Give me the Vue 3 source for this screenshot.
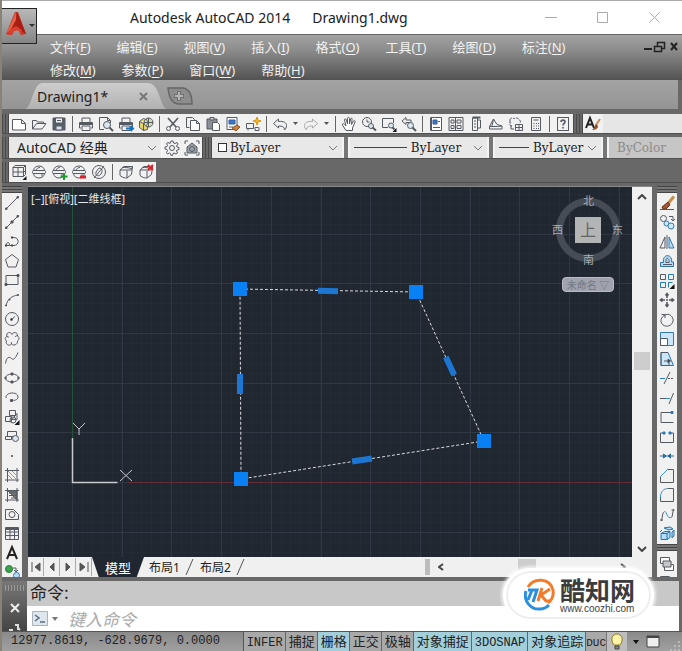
<script setup>
import { ref } from 'vue'

const menus = [
  ['文件', 'F'], ['编辑', 'E'], ['视图', 'V'], ['插入', 'I'], ['格式', 'O'], ['工具', 'T'],
  ['绘图', 'D'], ['标注', 'N'], ['修改', 'M'], ['参数', 'P'], ['窗口', 'W'], ['帮助', 'H'],
]

const globe = '<path d="M2.500 6.500C3 3.500 5 2 8 2s5 1.500 5.500 4.500zM2.500 9.500C3 12.500 5 14 8 14s5-1.500 5.500-4.500z"/><rect x="1.500" y="6.500" width="13" height="3" rx="1"/><path d="M5 6.500C5.500 4.500 7 3.500 9 3.500M11 9.500v3"/>'
const printer = '<path d="M4 6V2h8v4M3 12H1.500V6.500h13V12H13M4 10h8v4.500H4z"/><path d="M2 8h12" stroke-width="2"/>'
const cube = '<path d="M2 6l4-3.500h8.500L13 6zM2 6v5.500c3 2.500 5 2.500 7 2.500V6.500M9 14l4.500-3.500 1-8M4 3.500c3 0 7 0 9 1"/>'

const icons = {
  new: '<path d="M1.500 3.500h9l4 4v6.500h-13zM10.500 3.500v4h4" fill="#fff"/>',
  open: '<path d="M1.500 13V4.500h4l1 1.500h6v2M1.500 13l4-5.500h9.500l-4 5.500z"/>',
  save: '<path d="M2 2h12v12H2z" fill="#555e6b"/><path d="M4.500 2h7v5h-7z" fill="#eee"/><path d="M5 10h6v4H5z" fill="#dde"/><path d="M6 4.500h4"/>',
  print: printer,
  preview: '<path d="M6 13.500H1.500v-12h8l3 3V7M9.500 1.500v3h3"/><circle cx="9" cy="9" r="3.500" fill="#dce7ee"/><path d="M11.500 11.500L15 15" stroke-width="2"/>',
  publish: printer + '<path d="M8 12.500h7M12.500 10l2.500 2.500-2.500 2.500" stroke="#1673b8" stroke-width="2"/>',
  dwf: '<path d="M1.500 5.500l4-3 4 2v9l-4 1-4-3zM5.500 7.500v7M1.500 5.500l4 2 4-3" fill="#e6d36a"/><circle cx="10.500" cy="6.500" r="4.500" fill="#d8dfa0"/><path d="M6 6.500h9M10.500 2v9M8 3c2 2 2 5 0 7"/>',
  cut: '<path d="M3 2l8 9M13 2L5 11" stroke-width="1.600"/><circle cx="3.500" cy="12.500" r="2"/><circle cx="12.500" cy="12.500" r="2"/>',
  copy: '<path d="M4.500 11.500h-3v-10h6l2 2V5"/><path d="M5.500 4.500h6l3 3v7h-9zM11.500 4.500v3h3" fill="#fff"/>',
  paste: '<path d="M2 3h10v10H2z" fill="#8a8f98"/><path d="M5 1.500h4V4H5z" fill="#ccc"/><path d="M7.500 6.500h5l2 2v6h-7z" fill="#fff"/>',
  match: '<path d="M2 1.500h10v12H2z" fill="#fff"/><path d="M4 4h6v4H4z" fill="#3d78c4" stroke="#2a5fa5"/><path d="M4 11h4"/><path d="M7 12l5-3 3 2-4 4z" fill="#c9803c" stroke="#8e5426"/>',
  block: '<path d="M1.500 7.500h7v5h-7zM3 12.500v2M10 11.500h3.500M10 11.500v3h4v-3"/><path d="M12 1l1 3 3 1-3 1-1 3-1-3-3-1 3-1z" fill="#f3b624" stroke="#d99a12"/>',
  undo: '<path d="M1.500 7.500l5-4.500v2.500c5-.500 8 1 8 4 0 2-1 3.500-2 4.500 0-3-2-4-6-4V12z"/>',
  redo: '<path d="M14.500 7.500l-5-4.500v2.500c-5-.500-8 1-8 4 0 2 1 3.500 2 4.500 0-3 2-4 6-4V12z" stroke="#aaa"/>',
  hand: '<path d="M5 14.500L1.500 9C1 7.500 2.500 7 3.500 8.500L5 10 3.500 4c0-1.500 1.500-1.500 2 0L6.500 8V2.500c0-1.500 2-1.500 2 0V8l1-5c.500-1.500 2-1 1.500.500L10.500 8.500l2-3.500c1-1 2 0 1.500 1l-2.500 6v2.500z" fill="#fff"/>',
  zoom: '<circle cx="6" cy="6" r="4.500"/><path d="M6 3.500V6h2.500"/><circle cx="10" cy="10" r="2.500" fill="#dbe8ef"/><path d="M11.500 11.500l3.500 3" stroke-width="2"/>',
  zoomwin: '<path d="M7 11.500H1.500v-9h11V7"/><circle cx="10" cy="9.500" r="2.500" fill="#dbe8ef"/><path d="M11.500 11.500l2 2" stroke-width="2"/><path d="M15.500 12v4h-4z" fill="#111" stroke="none"/>',
  zoomprev: '<path d="M1 5l4-3.500V4h5v2.500H5v2z"/><circle cx="9.500" cy="9.500" r="3" fill="#dbe8ef"/><path d="M11.500 11.500L15 15" stroke-width="2"/>',
  props: '<path d="M3 1.500h10.500v13H3z" fill="#fff"/><path d="M5 4h4v4H5z" fill="#3d78c4" stroke="#2c5a9c"/><path d="M10 5.500h2M5 11.500h7"/><path d="M3 1.500v13" stroke-width="2"/>',
  center: '<path d="M1 1.500h14v13H1zM3 4h3v3H3zM3 9.500h3v3H3zM9 4h4v3H9zM9 9.500h4v3H9zM7.500 2v12"/>',
  palette: '<path d="M4.500 2h5v12.500h-5zM9.500 4h3v8h-3M6 5h2M6 8h2M6 11h2"/><path d="M4.500 1.500h8" stroke-width="2"/>',
  sheet: '<path d="M1.500 10.500l4-7.500 3.500 5.500 5 1.500v3h-12.500zM1.500 10.500h8l4.500-.500M5.500 3l-1.500 7"/>',
  markup: '<path d="M2 4c0-2 3-3 4-1 1-2 5-1 5 1 2 0 2 3 0 3M4 10c-3 0-3-3-1-3M2 4v3" stroke-dasharray="3 1"/><path d="M7.500 8.500h7v6h-7zM7.500 11.500h7M11 8.500v6M3 9v4h3"/>',
  calc: '<path d="M3.500 1.500h9v13h-9zM5.500 4h5M5.500 7.500h1M8 7.500h1M10 7.500h1M5.500 10h1M8 10h1M10 10h1M5.500 12.500h1M8 12.500h1M10 12.500h1"/>',
  help: '<rect x="2.500" y="1.500" width="11" height="13"/><path d="M6 6c0-2.500 4-2.500 4 0 0 1.500-2 1.500-2 3.500M8 11v1.500" stroke-width="1.600"/>',
  style: '<path d="M1 12L5 2l4 10M2.500 8.500h5" stroke="#222" stroke-width="2"/><path d="M15 3l-4 6" stroke="#c58c55" stroke-width="2"/><path d="M11 8l2 2c0 3-3 4-6 4 2-1 2-4 4-6z" fill="#8a512e" stroke="none"/>',
  gear: '<path d="M7 1h2l.500 2 1.500.500L13 2.500 14 4l-1.500 2 .500 1 2 .500v2l-2 .500-.500 1 1 2-1.500 1-2-1-1 .500-.500 2H7l-.500-2-1-.500-2 1-1-1.500 1-2-.500-1-2-.500v-2l2-.500.500-1-1-2L4 2.500l2 1z"/><circle cx="8" cy="8" r="2.500"/>',
  wsset: '<path d="M1 4V1h3M12 1h3v3M1 12v3h3M12 15h3v-3"/><path d="M3 7l5-4 5 4v6H3z" fill="#9ba1a8"/><circle cx="8" cy="9" r="2.500"/>',
  vp: '<path d="M2 3.500l2-2h10.500v9l-2 2H2zM2 3.500h10.500v9M12.500 3.500l2-2M7 3.500v9M2 8h10.500l2-1"/><path d="M15.500 12v4h-4z" fill="#111" stroke="none"/>',
  sphere: globe,
  sphereadd: globe + '<path d="M13 9v7M9.500 12.500h7" stroke="#1d9a2f" stroke-width="2"/>',
  sphererem: globe + '<path d="M9 13h6" stroke="#d7262b" stroke-width="3"/>',
  sphereoff: '<circle cx="8" cy="8" r="6.500"/><path d="M3 14L13 2M8 4c3 0 4 3 2 6s-6 2-5-2z"/>',
  cube,
  cubex: cube + '<path d="M10 1l5 5M15 1l-5 5" stroke="#d7262b" stroke-width="2"/>',
  line: '<path d="M2 14L14 2"/><path d="M1.500 13h1.500v1.500H1.500zM13 1.500h1.500V3H13z" fill="#444"/>',
  xline: '<path d="M1.500 14.500l13-13"/><path d="M1.500 13h1.500v1.500H1.500zM13 1.500h1.500V3H13zM7 7h2v2H7z" fill="#444"/>',
  pline: '<path d="M2 12.500h8c5.500 0 5.500-8 0-8H8M2 12.500C3 8.500 5 8.500 5.500 12"/><path d="M1 11.500h2v2H1zM7 11.500h2v2H7zM7 3.500h2v2H7z" fill="#444" stroke="none"/>',
  polygon: '<path d="M8 1.500l6.500 5-2.500 7.500H4L1.500 6.500z"/>',
  rect: '<path d="M2 3.500h12v9H2z"/><path d="M1 11.500h2v2H1zM13 2.500h2v2h-2z" fill="#444"/>',
  arc: '<path d="M2 14C3 8 7 4 14 3"/><path d="M1.500 13h1v1h-1zM5 7h1v1H5zM13.500 2.500h1v1h-1z" fill="#444"/>',
  circle: '<circle cx="8" cy="8" r="6.500"/><path d="M7 9l4-3.500"/><circle cx="7.500" cy="8.500" r="1" fill="#234"/>',
  cloud: '<path d="M8 3.500C9 .500 14 1 13.500 5c2 1 2 3.500 0 5 .500 4-4.500 5-6 3C5.500 15.500 1 13.500 2.500 10 .500 8 1 6 3 5.500 1.500 1.500 6.500 0 8 3.500zM13.500 5c-1-.500-2 0-2.500 1M7.500 13c0-1 0-1.500-.500-2M3 5.500c1 0 1.500.500 2 1"/>',
  spline: '<path d="M1.500 13.500c1-7 4-7 6-5s4 0 6.500-6"/>',
  ellipse: '<ellipse cx="8" cy="8" rx="6.500" ry="4"/><path d="M7 3h2v2H7zM7 11h2v2H7zM1 7h1v2H1zM14 7h1v2h-1z" fill="#444"/>',
  earc: '<path d="M2 9c-1-6 12-7 12-1 0 3-4 4-7 3"/><path d="M6.500 10.500h2v2h-2z" fill="#444"/>',
  insert: '<path d="M5.500 1.500h6v5h-6zM1.500 7.500h6v5h-6zM8 10.500l5-6v6z"/><circle cx="9" cy="11" r="3"/><path d="M15.500 11v5h-5z" fill="#111" stroke="none"/>',
  mkblock: '<path d="M3.500 3.500h9v5h-9zM1.500 8.500h6v3h-6z"/><circle cx="11.500" cy="10.500" r="3" fill="#dbe8ef"/>',
  point: '<path d="M7.500 7.500h1v1h-1z" fill="#333"/>',
  hatch: '<path d="M3.500 1v14M13 1v14M1 3.500h14M1 13h14"/><path d="M4 8l5 5M4 4l9 9M8 4l5 5" stroke="#8b99a8"/>',
  gradient: '<path d="M4 4h9v9z" fill="#777"/><path d="M3.500 1v14M13 1v14M1 3.500h14M1 13h14M5 6h8M5 8.500h8M7 11h6"/>',
  region: '<path d="M1.500 3.500h8l5 5v5h-13z"/><circle cx="8" cy="8.500" r="3"/>',
  table: '<path d="M1.500 2.500h13v12h-13zM1.500 7h13M1.500 10.500h13M6 4v10M10.500 4v10"/><path d="M2 4h12" stroke-width="2"/>',
  mtext: '<path d="M3 14L8 2l5 12M4.500 10h7" stroke="#222" stroke-width="2"/>',
  addsel: '<circle cx="5" cy="5" r="3.500" fill="#3aa54a" stroke="#2a7d37"/><path d="M9 4h3v3M10 6l2 2 2-2"/><circle cx="12.500" cy="11.500" r="3" fill="#bcdcf2" stroke="#3379b5"/>',
  erase: '<path d="M15 1.500L9 8.500" stroke="#c98d43" stroke-width="3"/><path d="M9 7l2 3-4 4H4l-1-2z" fill="#9e5530" stroke="#6d3a20"/><path d="M1 14.500h14" stroke="#a33"/>',
  cp: '<circle cx="4.500" cy="4.500" r="3"/><path d="M10 2.500h4v4M12 5l2 2 2-2"/><circle cx="7.500" cy="9.500" r="2.500" fill="#cfe6f6" stroke="#3379b5"/><circle cx="12" cy="12" r="3" fill="#cfe6f6" stroke="#3379b5"/>',
  mirror: '<path d="M8 1v14M6 3v11H1z"/><path d="M10 3v11h5z" fill="#b8dcf5" stroke="#3379b5"/>',
  offset: '<path d="M1.500 13.500v-4h3C3 0 14 1 12.500 9h2v4.500z" fill="#b8dcf5" stroke="#2f6f9f"/><path d="M4 11.500h9M7 9.500c-1-6 4-5 3 0z"/>',
  array: '<path d="M1.500 1.500h5v5h-5z"/><path d="M9.500 1.500h5v5h-5zM1.500 9.500h5v5h-5zM13.500 9.500h-4v5" stroke="#2579bb"/><path d="M15.500 11v5h-5z" fill="#111" stroke="none"/>',
  move: '<path d="M8 2v4M8 10v4M2 8h4M10 8h4M6.500 3.500L8 1.500l1.500 2M6.500 12.500L8 14.500l1.500-2M3.500 6.500L1.500 8l2 1.500M12.500 6.500l2 1.500-2 1.500" stroke-width="1.600"/><path d="M7.500 7.500h1v1h-1z"/>',
  rotate: '<path d="M5 3.500C10 0 15 5 14 9.500 12 16 3 15.500 2 9.500 1.700 7 3 5 5 3.500zM2.500 2.500h3.500V6"/>',
  scale: '<path d="M1.500 1.500h13v13h-13z" fill="#cbe6f8" stroke="#3379b5"/><path d="M1.500 7.500h7v7h-7z" fill="#fff"/>',
  stretch: '<path d="M2 1.500h7l5.500 13H2z" fill="#cbe6f8" stroke="#3379b5"/><path d="M9 1.500H2v13h8v-3M5 10h6"/><path d="M9 8l2.500 2L9 12z" fill="#222"/>',
  trim: '<path d="M1 8.500h5" stroke="#2f7cba"/><path d="M9 8.500h6" stroke-dasharray="2 1"/><path d="M5 14l6-12"/>',
  extend: '<path d="M1 8.500h6M14.500 3L10 14"/><path d="M7 8.500h4" stroke="#2f8dd6"/>',
  brk: '<path d="M14 3.500H2v10h12.500"/><path d="M12 2.500h2v2h-2z" fill="#2579bb" stroke="#2579bb"/>',
  brk2: '<path d="M4 4H1.500v9.500h13V4H12"/><path d="M4 3h2v2H4zM10 3h2v2h-2z" fill="#2579bb" stroke="#2579bb"/>',
  join: '<path d="M1 8h14M4.500 6L7 8l-2.500 2zM11.500 6L9 8l2.500 2z" fill="#2579bb" stroke="#276a98"/>',
  chamfer: '<path d="M8.500 1.500h6v13h-13v-6"/><path d="M1.500 8.500l7-7" stroke="#3a93d2"/>',
  fillet: '<path d="M9 1.500h5.500v13h-13V10"/><path d="M1.500 10c0-5 3-8.500 7.500-8.500" stroke="#3a93d2"/>',
  blend: '<path d="M2.500 14L4 6M13 10l1.500-8"/><path d="M4 6c4-6 3 8 9 4" stroke="#3a93d2"/><path d="M1 13h3M12.500 3h3"/>',
  explode: '<path d="M2 7.500l4-2h5v6l-3 2H2zM2 7.500h6v6M8 7.500l3-2M5 2l6-1 3 2-4 1zM13 6l2-2v6l-2 2zM1 6l2-2" fill="#b8dcf5" stroke="#1f76b4"/>',
  order: '<path d="M1.500 1.500h9v6h-9zM5.500 8.500h9v6h-9z" fill="#fff"/><path d="M4 5h8v6H4z" fill="#c7c7c7"/>',
}

const standard = ['new', 'open', 'save', '|', 'print', 'preview', 'publish', 'dwf', '|', 'cut', 'copy', 'paste', 'match', 'block', '|', 'undo', 'v', 'redo', 'v', '|', 'hand', 'zoom', 'zoomwin', 'zoomprev', '|', 'props', 'center', 'palette', 'sheet', 'markup', 'calc', '|', 'help']
const viewports = ['vp', 'sphere', 'sphereadd', 'sphererem', 'sphereoff', '|', 'cube', 'cubex']
const drawTools = ['line', 'xline', 'pline', 'polygon', 'rect', 'arc', 'circle', 'cloud', 'spline', 'ellipse', 'earc', 'insert', 'mkblock', 'point', 'hatch', 'gradient', 'region', 'table', 'mtext', 'addsel']
const modifyTools = ['erase', 'cp', 'mirror', 'offset', 'array', 'move', 'rotate', 'scale', 'stretch', 'trim', 'extend', 'brk', 'brk2', 'join', 'chamfer', 'fillet', 'blend', 'explode']

// Drawing grid: the origin of the drawing is at (44, 295) in the viewport.
const step = 49.7
const majorX = Array.from({ length: 30 }, (_, i) => Math.round(44 + i * step) + 0.5)
const minorX = Array.from({ length: 150 }, (_, i) => Math.round(4 + i * step / 5) + 0.5)
const majorY = Array.from({ length: 20 }, (_, i) => Math.round(295 + (i - 9) * step) + 0.5)
const minorY = Array.from({ length: 90 }, (_, i) => Math.round(295 + (i - 45) * step / 5) + 0.5)

const vertices = [[212, 102], [388, 105], [456, 254], [213, 292]]
const mids = [[300, 104, 1], [422, 179, 65], [334, 273, 171], [212, 197, 90]]
const outline = vertices.map((p) => p.join(',')).join(' ')

const toggles = ref([
  { label: 'INFER', on: false }, { label: '捕捉', on: false }, { label: '栅格', on: true },
  { label: '正交', on: false }, { label: '极轴', on: false }, { label: '对象捕捉', on: true },
  { label: '3DOSNAP', on: true }, { label: '对象追踪', on: true },
])
const isLatin = (s) => /^[\dA-Z]+$/.test(s)
const command = ref('')
</script>

<template>
  <div class="app">
    <header class="title">
      <span>Autodesk AutoCAD 2014</span>
      <span class="file">Drawing1.dwg</span>
      <div class="winbtns">
        <button><svg width="12" height="12"><path d="M0 5.500h12" /></svg></button>
        <button><svg width="12" height="12"><path d="M.5.500h10v10H.500z" /></svg></button>
        <button><svg width="12" height="12"><path d="M.5.500l10 10M10.500.500l-10 10" /></svg></button>
      </div>
    </header>
    <button class="appbtn">
      <svg width="34" height="34" viewBox="0 0 34 34">
        <path d="M13 3h3l8 22-5 1-2-4-2-1-3 1-2 4-6-1z" fill="#c63225" />
        <path d="M14 3L4 25l5-5 5-9z" fill="#e6604a" />
        <path d="M15 3l9 22-9-6-6 2 5-10z" fill="#a81d14" />
        <path d="M9 20l5-3 6 4-1 5-3-5-4 1-3 4H5z" fill="#d9412e" />
        <path d="M27 15h6l-3 3z" fill="#333" />
      </svg>
    </button>
    <div class="menubar">
      <nav class="menus">
        <button v-for="m in menus" :key="m[1]">{{ m[0] }}(<u>{{ m[1] }}</u>)</button>
      </nav>
      <button class="mdi">
        <svg width="34" height="12" fill="none" stroke="#222">
          <path d="M0 8h8" stroke-width="2" />
          <path d="M10.500 5.500h7v5h-7zM13.500 5V1.500h7v6H18" stroke-width="1.500" />
          <path d="M27 2l6 7M33 2l-6 7" stroke-width="2" />
        </svg>
      </button>
    </div>

    <div class="doctabs">
      <button class="doctab">
        <svg class="tabshape" viewBox="0 0 142 26" preserveAspectRatio="none">
          <defs><linearGradient id="tg" x1="0" y1="0" x2="0" y2="1"><stop offset="0" stop-color="#cdcdcd" /><stop offset="1" stop-color="#b2b2b2" /></linearGradient></defs>
          <path d="M0 26C8 24 7 0 18 0h104c14 0 12 24 20 26z" fill="url(#tg)" />
        </svg>
        <span>Drawing1*</span>
        <svg width="9" height="9"><path d="M1 1l7 7M8 1L1 8" stroke="#777" stroke-width="2" /></svg>
      </button>
      <button class="addtab">
        <svg width="26" height="18" viewBox="0 0 26 18"><path d="M1 1h15c6 1 9 7 9 16H12C5 17 2 11 1 1z" fill="#8d8d8d" stroke="#666" stroke-width="1.500" /><path d="M12 4v10M7 9h10" stroke="#6f6f6f" stroke-width="4" /><path d="M12 5v8M8 9h8" stroke="#b5b5b5" stroke-width="2" /></svg>
      </button>
    </div>

    <div class="bar">
      <i class="grip" />
      <div class="tools">
        <template v-for="(t, i) in standard" :key="i">
          <i v-if="t === '|'" class="sep" />
          <button v-else-if="t === 'v'" class="drop"><svg width="6" height="4"><path d="M0 0h5l-2.500 3z" fill="#555" /></svg></button>
          <button v-else class="tool"><svg class="ic" viewBox="0 0 16 16" v-html="icons[t]" /></button>
        </template>
      </div>
      <i class="grip" />
      <div class="tools fill">
        <button class="tool"><svg class="ic" viewBox="0 0 16 16" v-html="icons.style" /></button>
        <i class="blank" />
      </div>
    </div>

    <div class="bar tall">
      <i class="grip" />
      <label class="combo ws">
        <select><option>AutoCAD 经典</option></select>
        <svg width="10" height="6"><path d="M1 1l4 4 4-4" /></svg>
      </label>
      <div class="tools">
        <button class="tool"><svg class="ic" viewBox="0 0 16 16" v-html="icons.gear" /></button>
        <button class="tool"><svg class="ic" viewBox="0 0 16 16" v-html="icons.wsset" /></button>
      </div>
      <i class="grip" />
      <label class="combo color">
        <i class="swatch" />
        <select><option>ByLayer</option></select>
        <svg width="10" height="6"><path d="M1 1l4 4 4-4" /></svg>
      </label>
      <i class="div" />
      <label class="combo ltype">
        <i class="stroke" />
        <select><option>ByLayer</option></select>
        <svg width="10" height="6"><path d="M1 1l4 4 4-4" /></svg>
      </label>
      <i class="div" />
      <label class="combo weight">
        <i class="stroke" />
        <select><option>ByLayer</option></select>
        <svg width="10" height="6"><path d="M1 1l4 4 4-4" /></svg>
      </label>
      <i class="div" />
      <label class="combo off"><select disabled><option>ByColor</option></select></label>
    </div>

    <div class="bar last">
      <i class="grip" />
      <div class="tools">
        <template v-for="(t, i) in viewports" :key="i">
          <i v-if="t === '|'" class="sep" />
          <button v-else class="tool"><svg class="ic" viewBox="0 0 16 16" v-html="icons[t]" /></button>
        </template>
      </div>
    </div>

    <main class="work">
      <aside class="side left">
        <i class="hgrip" />
        <div class="stack">
          <button v-for="t in drawTools" :key="t"><svg class="ic" viewBox="0 0 16 16" v-html="icons[t]" /></button>
        </div>
      </aside>

      <section class="view">
        <div class="canvasrow">
          <div class="canvas">
            <svg class="drawing" width="100%" height="100%">
              <g stroke="#232b35">
                <line v-for="x in minorX" :key="'a' + x" :x1="x" :x2="x" y1="0" y2="100%" />
                <line v-for="y in minorY" :key="'b' + y" :y1="y" :y2="y" x1="0" x2="100%" />
              </g>
              <g stroke="#2f3943">
                <line v-for="x in majorX" :key="'c' + x" :x1="x" :x2="x" y1="0" y2="100%" />
                <line v-for="y in majorY" :key="'d' + y" :y1="y" :y2="y" x1="0" x2="100%" />
              </g>
              <path d="M44.500 0v250" stroke="#265335" />
              <line x1="100" x2="100%" y1="295.500" y2="295.500" stroke="#642b38" />
              <path d="M44.500 251v44.500h45" stroke="#c8cacd" stroke-width="1.500" fill="none" />
              <path d="M45 236l6 6 6-6M51 242v6M92 283l12 11M104 283l-12 11" stroke="#c8cacd" fill="none" />
              <polygon :points="outline" fill="none" stroke="#d9dbdd" stroke-dasharray="3 2" />
              <rect v-for="(m, i) in mids" :key="i" :x="m[0] - 10" :y="m[1] - 3" width="20" height="6" fill="#1c76d2" :transform="`rotate(${m[2]} ${m[0]} ${m[1]})`" />
              <rect v-for="(p, i) in vertices" :key="'v' + i" :x="p[0] - 7" :y="p[1] - 7" width="14" height="14" fill="#0a80f5" />
            </svg>
            <div class="vplabel">[−][俯视][二维线框]</div>
            <div class="compass">
              <div class="ring" />
              <span class="n">北</span><span class="w">西</span><button class="face">上</button><span class="e">东</span><span class="s">南</span>
            </div>
            <button class="ucs">未命名 ▽</button>
          </div>
          <div class="vscroll">
            <svg width="10" height="6"><path d="M1 5l4-4 4 4" /></svg>
            <i class="thumb" />
            <svg width="10" height="6"><path d="M1 1l4 4 4-4" /></svg>
          </div>
        </div>
        <div class="layouts">
          <button class="nav"><svg width="10" height="10"><path d="M1 0v10M9 1L4 5l5 4z" /></svg></button>
          <button class="nav"><svg width="10" height="10"><path d="M7 1L3 5l4 4z" /></svg></button>
          <button class="nav"><svg width="10" height="10"><path d="M3 1l4 4-4 4z" /></svg></button>
          <button class="nav"><svg width="10" height="10"><path d="M9 0v10M1 1l5 4-5 4z" /></svg></button>
          <button class="ltab model">模型</button>
          <button class="ltab">布局1</button>
          <svg class="slash" width="10" height="18"><path d="M1 17L8 1" /></svg>
          <button class="ltab">布局2</button>
          <svg class="slash" width="10" height="18"><path d="M1 17L8 1" /></svg>
          <div class="hscroll">
            <i class="split" />
            <svg width="6" height="8"><path d="M5 1L1 4l4 3" /></svg>
            <i class="thumb" />
            <svg width="6" height="8"><path d="M1 1l4 3-4 3" /></svg>
          </div>
        </div>
      </section>

      <aside class="side right">
        <i class="hgrip" />
        <div class="stack">
          <button v-for="t in modifyTools" :key="t"><svg class="ic" viewBox="0 0 16 16" v-html="icons[t]" /></button>
        </div>
        <i class="hgrip" />
        <div class="more">
          <button><svg class="ic" viewBox="0 0 16 16" v-html="icons.order" /></button>
          <button><svg class="ic" viewBox="0 0 16 16" v-html="icons.order" /></button>
        </div>
      </aside>
    </main>

    <section class="command">
      <div class="handle">
        <i class="dots" />
        <svg width="12" height="12"><path d="M2 2l8 8M10 2l-8 8" stroke="#eee" stroke-width="2" /></svg>
        <svg width="12" height="7" fill="none"><path d="M0 6h4M6 1h3v5M9 4l2 2" stroke="#ddd" stroke-width="2" /></svg>
      </div>
      <div class="cmdbody">
        <div class="history">命令:</div>
        <label class="entry">
          <svg width="26" height="16" viewBox="0 0 26 16"><path d="M.5.500h15v14H.500z" fill="#dfe6ee" stroke="#a9b2bd" /><path d="M3 4l4 3-4 3M8 11h5" fill="none" stroke="#5a6b80" stroke-width="1.500" /><path d="M20 6h6l-3 4z" fill="#777" /></svg>
          <input v-model="command" placeholder="键入命令">
        </label>
      </div>
      <div class="mark">
        <svg width="32" height="34" viewBox="0 0 32 34" fill="none">
          <path d="M4 9C10-1 26 0 29 12c1 6-1 10-5 13" stroke="#f47b2a" stroke-width="3" />
          <path d="M2 13c-3 10 5 19 14 18 4 0 7-2 9-4" stroke="#2a8fe0" stroke-width="3" />
          <path d="M4 12h9l-4 12M8 12L4 22" stroke="#2a8fe0" stroke-width="3" />
          <path d="M18 10l-4 13M26 11l-9 6 5 6h4" stroke="#f47b2a" stroke-width="3" />
        </svg>
        <div><b>酷知网</b><a href="#">www.coozhi.com</a></div>
      </div>
    </section>

    <footer class="status">
      <output>12977.8619, -628.9679, 0.0000</output>
      <div class="toggles">
        <button v-for="t in toggles" :key="t.label" :class="{ on: t.on, latin: isLatin(t.label) }" @click="t.on = !t.on">{{ t.label }}</button>
        <button class="clip">DUC</button>
      </div>
      <button class="bulb"><svg width="16" height="18" viewBox="0 0 16 18"><path d="M5 12C1 7 3 1 8 1s7 6 3 11z" fill="#fff4a8" stroke="#8f7a2c" /><path d="M6 13h4v3H6z" fill="#888" stroke="#444" /></svg></button>
      <button class="caret"><svg width="6" height="4"><path d="M0 0h6L3 4z" fill="#111" /></svg></button>
      <button class="clean"><svg width="14" height="13"><path d="M1 1h12v11H1z" fill="#eee" stroke="#444" /><path d="M1 2h12" stroke="#444" stroke-width="2" /></svg></button>
      <svg class="size" width="10" height="10"><path d="M8 0h2v2H8zM8 4h2v2H8zM4 4h2v2H4zM8 8h2v2H8zM4 8h2v2H4zM0 8h2v2H0z" fill="#bbb" /></svg>
    </footer>
  </div>
</template>

<style>
body { margin: 0; background: #686868; }
</style>

<style scoped>
* { box-sizing: border-box; }
.app {
  position: relative;
  display: flex;
  flex-direction: column;
  min-height: 100vh;
  overflow: hidden;
  background: #686868;
  border-left: 2px solid #8a8178;
  font-family: "Noto Sans", "Noto Sans CJK SC", sans-serif;
  color: #222;
}
button, select, input { font: inherit; color: inherit; border: 0; margin: 0; padding: 0; background: none; border-radius: 0; }
button { display: flex; align-items: center; justify-content: center; flex: none; }
svg { flex: none; display: block; }
i { display: block; flex: none; }
.ic { width: 16px; height: 16px; fill: none; stroke: #555a62; stroke-width: 1; overflow: visible; }

.title {
  display: flex;
  align-items: center;
  height: 35px;
  padding-left: 128px;
  background: #fff;
  border-top: 1px solid #aaa;
  border-bottom: 1px solid #666;
  font-size: 14px;
}
.file { margin-left: 22px; }
.winbtns { display: flex; margin-left: auto; padding-right: 1px; }
.winbtns button { width: 52px; height: 32px; }
.winbtns path { fill: none; stroke: #aaa; }
.appbtn {
  position: absolute;
  left: -1px;
  top: 8px;
  width: 36px;
  height: 36px;
  background: linear-gradient(#b9b9b9, #858585);
  border: 1px solid #222;
}

.menubar { display: flex; justify-content: space-between; height: 45px; padding: 0 4px 0 48px; background: linear-gradient(#a3a3a3, #8b8b8b 35%, #525252); }
.menus { display: flex; flex-wrap: wrap; flex: 0 1 570px; column-gap: 26px; align-content: flex-start; font-size: 13px; color: #f2f2f2; }
.menus button { height: 23px; }
.menus u { text-underline-offset: 2px; }
.mdi { height: 24px; }

.doctabs { display: flex; align-items: flex-end; height: 29px; padding-left: 23px; background: linear-gradient(#a3a3a3, #949494); margin-right: 4px; }
.doctab { position: relative; width: 142px; height: 26px; justify-content: flex-start; gap: 31px; padding-left: 12px; font-size: 14px; }
.doctab span, .doctab svg { position: relative; }
.doctab .tabshape { position: absolute; inset: 0; width: 100%; height: 100%; }
.addtab { margin-bottom: 4px; }

.bar { display: flex; height: 20px; margin-top: 5px; border-bottom: 1px solid #505050; }
.bar.tall { height: 22px; margin-top: 3px; }
.bar.last { height: 21px; margin: 3px 0 3px; }
.grip { width: 7px; background: repeating-linear-gradient(90deg, #4a4a4a 0 1px, #686868 1px 3px); }
.tools + .grip { width: 10px; }
.tools { display: flex; align-items: center; background: #f1f1f1; }
.fill { flex: 1; }
.tool { width: 20px; height: 19px; }
.sep { width: 1px; height: 16px; margin: 0 3px; background: #666; }
.drop { width: 11px; height: 19px; }
.blank { flex: 1; align-self: stretch; background: #e6e6e6; }

.combo { display: flex; align-items: center; padding: 0 4px; background: #e8e8e8; font-family: "DejaVu Serif", serif; font-size: 12px; min-width: 0; }
.combo select { flex: 1; min-width: 0; appearance: none; }
.combo svg path { fill: none; stroke: #777; }
.ws { width: 153px; padding-left: 8px; font-family: "Noto Sans", "Noto Sans CJK SC", sans-serif; font-size: 14px; border-right: 1px solid #fff; }
.color { flex: 134; }
.swatch { width: 9px; height: 9px; margin: 0 3px 0 2px; border: 1px solid #333; background: #fff; }
.ltype { flex: 142; }
.weight { flex: 108; }
.stroke { flex: 0 0 53px; margin-right: 4px; border-top: 1px solid #444; }
.weight .stroke { flex-basis: 30px; }
.div { width: 8px; border: solid #f4f4f4; border-width: 0 2px; background: #777; }
.off { flex: 67; padding-left: 8px; background: #c6c6c6; color: #8b8b8b; }
.off select { opacity: 1; }

.work { display: flex; flex: 1; min-height: 391px; }
.side { display: flex; flex-direction: column; width: 20px; overflow: hidden; }
.left { margin-right: 6px; }
.right { margin: 0 5px; }
.hgrip { height: 7px; background: repeating-linear-gradient(#444 0 1px, #777 1px 3px); }
.stack { display: flex; flex-direction: column; justify-content: space-between; flex: 1; background: #f1f1f1; }
.left .stack { margin-bottom: -5px; }
.stack button, .more button { width: 20px; height: 19px; }
.right .hgrip + .more { height: 26px; overflow: hidden; padding-top: 3px; background: #f1f1f1; }

.view { flex: 1; display: flex; flex-direction: column; min-width: 0; border-top: 1px solid #888; }
.canvasrow { display: flex; flex: 1; }
.canvas { position: relative; flex: 1; background: #202731; overflow: hidden; }
.drawing { position: absolute; inset: 0; }
.vplabel { position: absolute; left: 3px; top: 4px; font-size: 11px; line-height: 16px; color: #e8e8e8; }
.compass { position: absolute; right: 12px; top: 11px; width: 64px; height: 64px; color: #a8adb3; font-size: 11px; line-height: 12px; }
.ring { position: absolute; inset: 0; border: 7px solid #454c55; border-radius: 50%; }
.compass span { position: absolute; }
.n { left: 27px; top: -3px; }
.s { left: 27px; top: 56px; }
.w { left: -4px; top: 26px; }
.e { right: -3px; top: 26px; }
.face { position: absolute; left: 19px; top: 19px; width: 26px; height: 26px; background: #b3b4b6; color: #666; font-size: 16px; }
.ucs { position: absolute; right: 18px; top: 90px; width: 52px; height: 15px; border: 1px solid #b9bcc4; border-radius: 4px; background: #a0a3ad; color: #737782; font-size: 10px; line-height: 10px; }
.vscroll { display: flex; flex-direction: column; align-items: center; width: 20px; padding: 7px 0 5px; background: #f0f0f0; }
.vscroll path, .hscroll path { fill: none; stroke: #444; stroke-width: 2; }
.vscroll .thumb { width: 16px; height: 18px; margin: 152px 0 auto; background: #cdcdcd; }

.layouts { display: flex; height: 20px; align-items: center; background: #f0f0f0; font-size: 12px; }
.nav { width: 16px; height: 18px; border-right: 1px solid #aaa; }
.nav path { fill: #555; stroke: #555; }
.ltab { height: 20px; padding: 0 5px; }
.model { width: 52px; background: #202731; color: #fff; clip-path: polygon(0 0, 100% 0, 86% 100%, 13% 100%); font-size: 13px; }
.slash path { stroke: #555; fill: none; }
.hscroll { display: flex; align-items: center; flex: 1; height: 20px; padding-right: 26px; }
.split { width: 5px; height: 16px; margin: 0 8px 0 auto; background: #bcbcbc; }
.hscroll .thumb { width: 18px; height: 16px; margin: 0 84px 0 74px; background: #cdcdcd; }

.command { position: relative; display: flex; height: 54px; padding: 4px 3px 0 0; }
.handle { display: flex; flex-direction: column; align-items: center; justify-content: space-between; width: 25px; padding: 4px 0 0; background: linear-gradient(#777, #444); }
.dots { width: 20px; height: 6px; background: repeating-linear-gradient(90deg, #999 0 1px, transparent 1px 3px); }
.cmdbody { flex: 1; display: flex; flex-direction: column; min-width: 0; }
.history { height: 25px; padding-left: 3px; background: #c8c8c8; font: 17px/21px "Noto Sans CJK SC", sans-serif; }
.entry { flex: 1; display: flex; align-items: center; gap: 10px; padding-left: 5px; background: #fff; }
.entry input { flex: 1; min-width: 0; font: italic 17px/22px "Noto Sans CJK SC", sans-serif; outline: 0; }
.entry input::placeholder { color: #aaa; opacity: 1; }
.mark {
  position: absolute;
  right: 28px;
  top: -9px;
  display: flex;
  align-items: center;
  gap: 4px;
  height: 54px;
  padding: 0 16px 0 18px;
  border: 3px solid #fff;
  border-radius: 27px;
  background: #fff;
  box-shadow: inset 0 0 0 2px #eee, 0 0 3px 2px rgba(255, 255, 255, 0.7);
}
.mark b { display: block; font: 700 25px/27px "Noto Sans CJK SC", sans-serif; color: #3c3c3c; }
.mark a { display: block; font: 10px/12px "Liberation Sans", sans-serif; color: #444; text-decoration: none; }

.status { display: flex; align-items: stretch; height: 20px; background: linear-gradient(#8a8a8a, #a0a0a0); border-top: 1px solid #555; font: 12px/18px "Liberation Mono", "Noto Sans CJK SC", monospace; }
.status output { flex: 1; padding-left: 9px; min-width: 0; white-space: nowrap; }
.toggles { display: flex; border-left: 1px solid #555; }
.toggles button { padding: 3px 2px 0 3px; border-right: 1px solid #666; background: #a9a9a9; font-size: 13px; white-space: nowrap; }
.toggles button.on { background: #a3cfdb; }
.toggles button.latin { font-size: 12px; }
.toggles .clip { padding: 3px 0 0; border: 0; font-size: 11px; }
.bulb { width: 21px; background: #bdbdbd; border-left: 1px solid #777; }
.caret { width: 17px; }
.clean { width: 18px; }
.size { margin: 9px 2px 0 8px; }
</style>
